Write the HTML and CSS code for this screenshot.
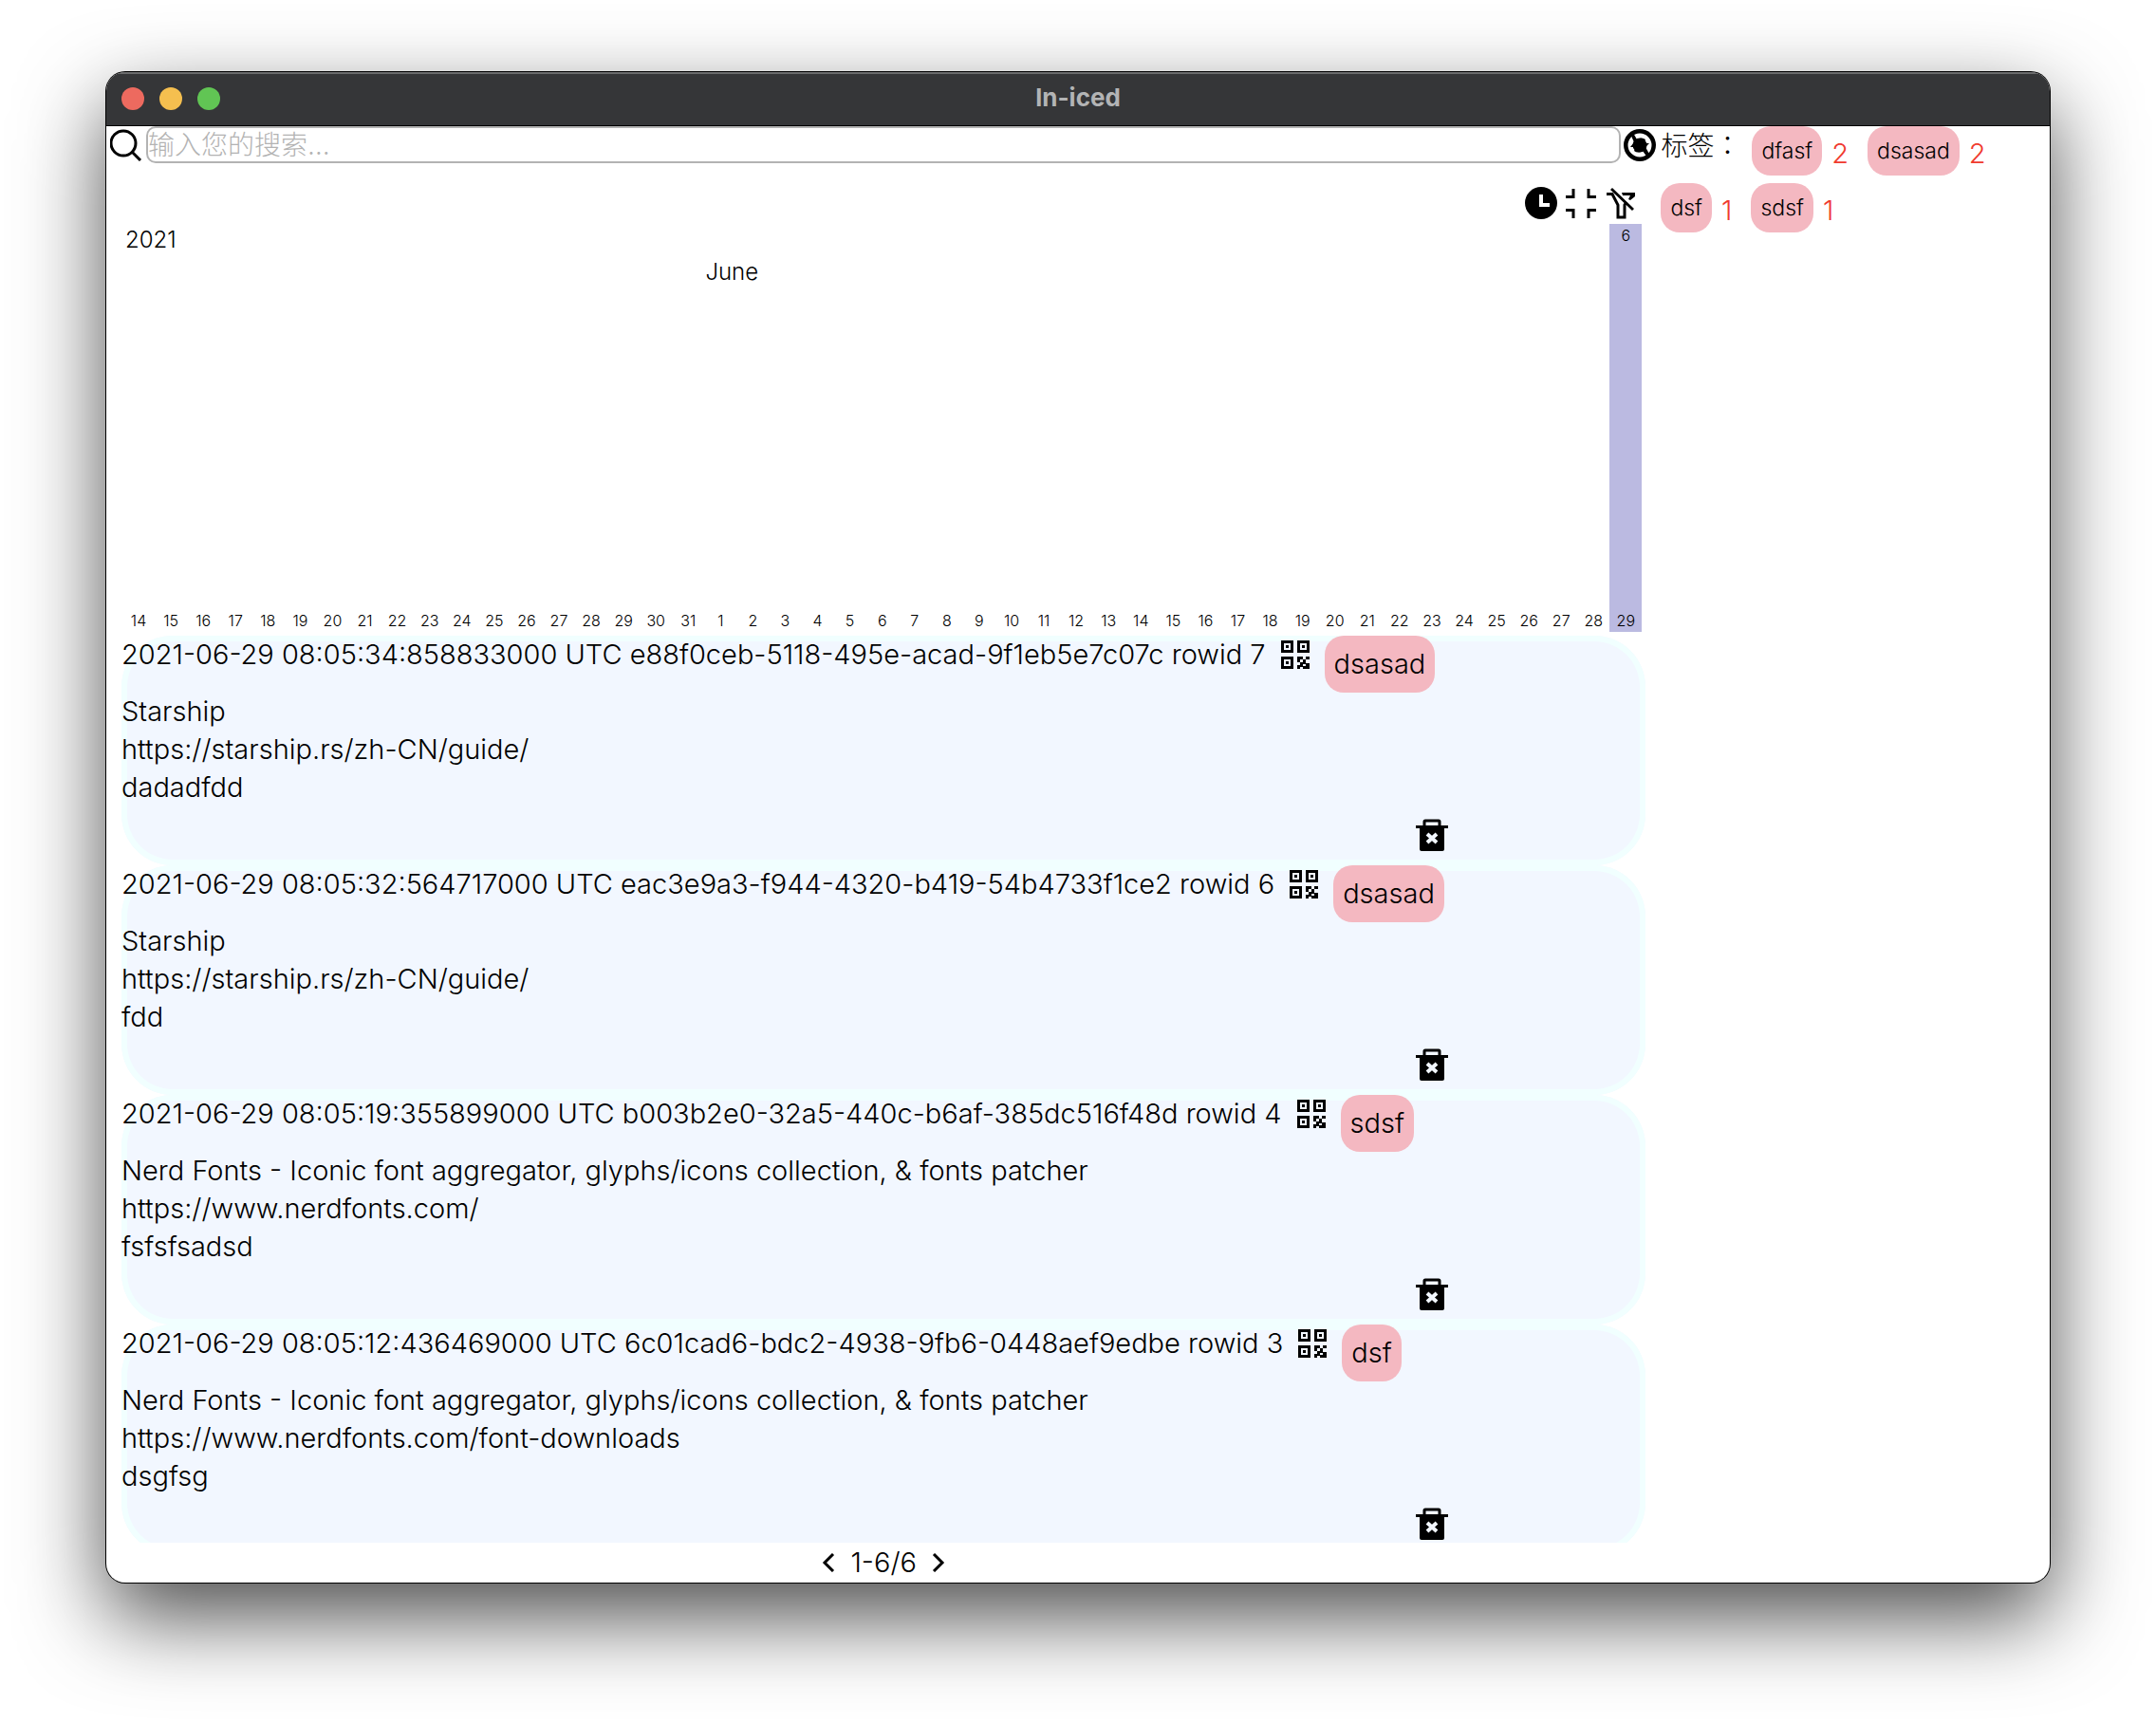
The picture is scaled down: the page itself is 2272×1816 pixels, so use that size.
FILE: index.html
```html
<!DOCTYPE html>
<html lang="zh-CN">
<head>
<meta charset="utf-8">
<title>ln-iced</title>
<link rel="stylesheet" href="styles.css">
</head>
<body>
<svg class="sprite" aria-hidden="true">
  <symbol id="qr" viewBox="0 0 30 30">
    <path fill-rule="evenodd" d="M0 0h13v13H0zM3 3v7h7V3zM17 0h13v13H17zM20 3v7h7V3zM0 17h13v13H0zM3 20v7h7v-7z"/>
    <path d="M5 5h3v3H5zM22 5h3v3h-3zM5 22h3v3H5zM17 17h6v3h-3v3h-3zM26 17h4v3h-4zM23 20h3v3h-3zM20 23h6v2h-3v3h-3v2h-3v-4h3zM26 24h4v6h-7v-3h3z"/>
  </symbol>
  <symbol id="trash" viewBox="0 0 34 34">
    <path d="M9 8V3q0-1 1-1h14q1 0 1 1v5" fill="none" stroke="currentColor" stroke-width="3"/>
    <path d="M0 7h34v3h-4v22q0 2-2 2H6q-2 0-2-2V10H0z"/>
    <path d="M12 16l10 9M22 16l-10 9" stroke="#f2f7ff" stroke-width="4"/>
  </symbol>
</svg>
<div class="window">
  <header class="titlebar">
    <div class="lights"><span class="light red"></span><span class="light yellow"></span><span class="light green"></span></div>
    <h1 class="title">ln-iced</h1>
  </header>
  <div class="content">
    <main class="main">
      <form class="search">
        <label class="icon-box" for="q"><svg viewBox="0 0 34 34" width="34" height="34"><circle cx="14" cy="15" r="13" fill="none" stroke="currentColor" stroke-width="3"/><path d="M23 24l9 9" stroke="currentColor" stroke-width="3"/></svg></label>
        <input class="search-input" id="q" type="text" placeholder="输入您的搜索…">
        <button class="icon-box refresh" type="button" aria-label="刷新"><svg viewBox="0 0 34 34" width="34" height="34"><circle cx="17" cy="17" r="17"/><circle cx="17" cy="17" r="10" fill="none" stroke="#fff" stroke-width="5"/><path d="M7 5l3-1 4 7q5-3 9 0l-2 4h6l-4 4 5 9-3 2-5-7q-5 3-9 0l2-4H7l4-5z"/></svg></button>
      </form>
      <div class="toolbar">
        <button class="tool" type="button" aria-label="时间"><svg viewBox="0 0 34 34" width="34" height="34"><circle cx="17" cy="17" r="17"/><path d="M17 8v11h9" fill="none" stroke="#fff" stroke-width="4"/></svg></button>
        <button class="tool" type="button" aria-label="收起"><svg viewBox="0 0 34 34" width="34" height="34"><path d="M1 10.500h8V2M33 10.500h-8V2M1 24.500h8V33M33 24.500h-8V33" fill="none" stroke="currentColor" stroke-width="3"/></svg></button>
        <button class="tool" type="button" aria-label="清除筛选"><svg viewBox="0 0 34 34" width="34" height="34"><path d="M2 7.500h6l6 11.500v13h7V19l2-3" fill="none" stroke="currentColor" stroke-width="3"/><path d="M18 6h14v4l-5 4-2-1 2-4h-8zM6 3l2-2 23 22-2 2z"/></svg></button>
      </div>
      <section class="chart">
        <div class="month-labels"><span>2021</span><span class="month">June</span></div>
        <ol class="days" id="days"></ol>
      </section>
      <section class="list">
        <article class="card">
          <div class="card-head"><span>2021-06-29 08:05:34:858833000 UTC e88f0ceb-5118-495e-acad-9f1eb5e7c07c rowid 7</span><button class="qr" type="button" aria-label="二维码"><svg width="30" height="30"><use href="#qr"/></svg></button><button class="tag" type="button">dsasad</button></div>
          <p>Starship</p><p>https://starship.rs/zh-CN/guide/</p><p>dadadfdd</p>
          <div class="card-foot"><button class="trash" type="button" aria-label="删除"><svg width="34" height="34"><use href="#trash"/></svg></button></div>
        </article>
        <article class="card">
          <div class="card-head"><span>2021-06-29 08:05:32:564717000 UTC eac3e9a3-f944-4320-b419-54b4733f1ce2 rowid 6</span><button class="qr" type="button" aria-label="二维码"><svg width="30" height="30"><use href="#qr"/></svg></button><button class="tag" type="button">dsasad</button></div>
          <p>Starship</p><p>https://starship.rs/zh-CN/guide/</p><p>fdd</p>
          <div class="card-foot"><button class="trash" type="button" aria-label="删除"><svg width="34" height="34"><use href="#trash"/></svg></button></div>
        </article>
        <article class="card">
          <div class="card-head"><span>2021-06-29 08:05:19:355899000 UTC b003b2e0-32a5-440c-b6af-385dc516f48d rowid 4</span><button class="qr" type="button" aria-label="二维码"><svg width="30" height="30"><use href="#qr"/></svg></button><button class="tag" type="button">sdsf</button></div>
          <p>Nerd Fonts - Iconic font aggregator, glyphs/icons collection, &amp; fonts patcher</p><p>https://www.nerdfonts.com/</p><p>fsfsfsadsd</p>
          <div class="card-foot"><button class="trash" type="button" aria-label="删除"><svg width="34" height="34"><use href="#trash"/></svg></button></div>
        </article>
        <article class="card">
          <div class="card-head"><span>2021-06-29 08:05:12:436469000 UTC 6c01cad6-bdc2-4938-9fb6-0448aef9edbe rowid 3</span><button class="qr" type="button" aria-label="二维码"><svg width="30" height="30"><use href="#qr"/></svg></button><button class="tag" type="button">dsf</button></div>
          <p>Nerd Fonts - Iconic font aggregator, glyphs/icons collection, &amp; fonts patcher</p><p>https://www.nerdfonts.com/font-downloads</p><p>dsgfsg</p>
          <div class="card-foot"><button class="trash" type="button" aria-label="删除"><svg width="34" height="34"><use href="#trash"/></svg></button></div>
        </article>
      </section>
      <nav class="pager">
        <button type="button" aria-label="上一页"><svg viewBox="0 0 14 20" width="14" height="20"><path d="M12 1l-9 9 9 9" fill="none" stroke="currentColor" stroke-width="3"/></svg></button>
        <span>1-6/6</span>
        <button type="button" aria-label="下一页"><svg viewBox="0 0 14 20" width="14" height="20"><path d="M2 1l9 9-9 9" fill="none" stroke="currentColor" stroke-width="3"/></svg></button>
      </nav>
    </main>
    <aside class="sidebar">
      <span class="side-label" lang="zh-TW">标签：</span>
      <div class="side-item"><button class="tag small" type="button">dfasf</button><span class="count">2</span></div>
      <div class="side-item"><button class="tag small" type="button">dsasad</button><span class="count">2</span></div>
      <div class="side-item"><button class="tag small" type="button">dsf</button><span class="count">1</span></div>
      <div class="side-item"><button class="tag small" type="button">sdsf</button><span class="count">1</span></div>
    </aside>
  </div>
</div>
<script src="chart.js"></script>
</body>
</html>
```
FILE: styles.css
```css
* { box-sizing: border-box; margin: 0; padding: 0; }
body {
  min-height: 100vh;
  display: flex;
  padding: 76px 112px 148px;
  background: #fff;
  color: #000;
  font: 300 29px/40px Inter, "Noto Sans CJK SC", sans-serif;
}
button { border: 0; background: none; color: inherit; font: inherit; cursor: pointer; }
svg { display: block; fill: currentColor; }
.sprite { position: absolute; width: 0; height: 0; }
.window {
  flex: 1;
  min-width: 0;
  display: flex;
  flex-direction: column;
  overflow: hidden;
  border-radius: 20px;
  background: #fff;
  box-shadow: 0 0 0 1px #000, 0 36px 90px rgba(0, 0, 0, .7);
}
.titlebar {
  display: grid;
  grid-template-columns: 1fr auto 1fr;
  align-items: center;
  height: 57px;
  padding: 0 16px;
  background: #353638;
  border-bottom: 1px solid #000;
  box-shadow: inset 0 2px #6b6c6d;
}
.lights { display: flex; gap: 16px; }
.light { width: 24px; height: 24px; border-radius: 50%; }
.red { background: #ed6a5f; }
.yellow { background: #f5bf4f; }
.green { background: #61c554; }
.title { padding-bottom: 2px; color: #b3b4b5; font-size: 26px; line-height: 32px; font-weight: 700; }
.content { flex: 1; display: flex; min-height: 0; }
.main { width: 80%; display: flex; flex-direction: column; }
.search { display: flex; height: 39px; }
.icon-box { flex: 0 0 42px; display: grid; place-items: center; }
.refresh { padding-right: 2px; }
.search-input {
  flex: 1;
  min-width: 0;
  border: 2px solid #b3b3b3;
  border-radius: 10px;
  color: #000;
  font: inherit;
  font-size: 28px;
  outline: 0;
}
.search-input::placeholder { color: #b3b3b3; opacity: 1; }
.toolbar { display: flex; justify-content: flex-end; gap: 8px; padding: 25px 25px 5px 0; }
.tool { width: 34px; height: 34px; }
.chart {
  display: flex;
  flex-direction: column;
  height: 430px;
  margin: 0 20px 4px 17px;
  position: relative;
}
.month-labels {
  position: absolute;
  top: 0;
  left: 3px;
  right: 0;
  display: grid;
  grid-template-columns: 38% auto;
  font-size: 24px;
  line-height: 34px;
}
.month { grid-area: 2 / 2; padding-left: 4px; }
.days { flex: 1; display: grid; grid-auto-flow: column; grid-auto-columns: 1fr; list-style: none; font-size: 16px; line-height: 24px; text-align: center; }
.day { display: flex; flex-direction: column; justify-content: space-between; }
.day.active { background: #bbbae1; }
.list { flex: 1 1 0; min-height: 0; overflow: hidden; margin: 0 16px; }
.card {
  height: 242px;
  border-radius: 54px;
  background: #f2f7ff;
  box-shadow: inset 0 0 0 6px #f1ffff;
}
.card-head { display: flex; align-items: flex-start; height: 60px; white-space: nowrap; }
.qr { height: 40px; padding: 0 16px; }
.tag { padding: 10px; border-radius: 20px; background: #f4b8c1; }
.tag.small { font-size: 23px; line-height: 32px; }
.card-foot { display: flex; justify-content: flex-end; padding: 13px 208px 0 0; }
.pager { display: flex; justify-content: center; align-items: center; gap: 16px; height: 42px; }
.sidebar { flex: 1; display: flex; flex-wrap: wrap; align-content: flex-start; gap: 8px 20px; }
.side-label { width: 76px; font-family: "Noto Sans CJK TC", sans-serif; font-size: 28px; line-height: 38px; white-space: nowrap; }
.side-item { display: flex; align-items: center; gap: 10px; }
.count { padding-top: 6px; color: #f03a2e; }
```
FILE: chart.js
```js
const list = document.getElementById('days');
const days = [];
for (let d = 14; d <= 31; d++) days.push({ d, n: 0 });
for (let d = 1; d <= 29; d++) days.push({ d, n: d === 29 ? 6 : 0 });
for (const { d, n } of days) {
  const li = document.createElement('li');
  li.className = n ? 'day active' : 'day';
  const count = document.createElement('span');
  count.textContent = n || '';
  const label = document.createElement('span');
  label.textContent = d;
  li.append(count, label);
  list.append(li);
}
```
